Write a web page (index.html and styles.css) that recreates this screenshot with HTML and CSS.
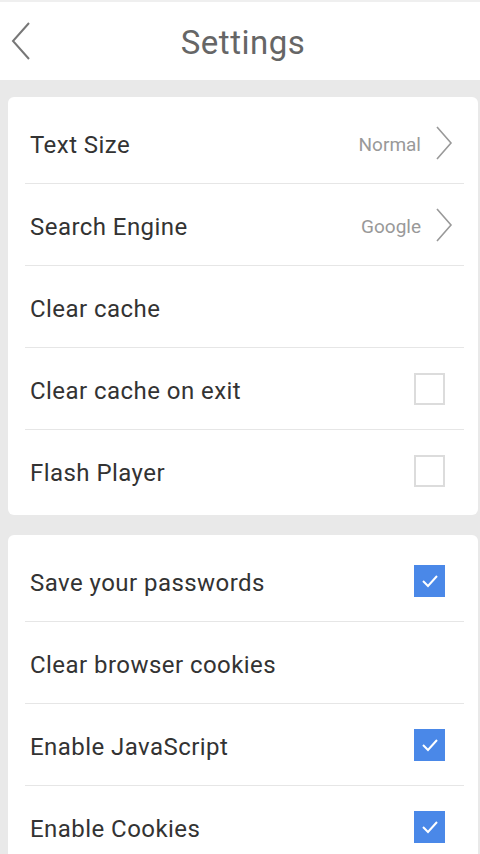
FILE: index.html
```html
<!DOCTYPE html>
<html lang="en">
<head>
    <meta charset="UTF-8">
    <meta name="viewport" content="width=device-width, initial-scale=1.0">
    <title>Settings</title>
    <link rel="stylesheet" href="styles.css">
</head>
<body>
    <header class="topbar">
        <button class="back" aria-label="Back">
            <svg width="22" height="40" viewBox="0 0 22 40"><path d="M19 2 L3 20 L19 38" fill="none" stroke="#777" stroke-width="2"/></svg>
        </button>
        <h1 class="title">Settings</h1>
    </header>

    <main class="content">
        <section class="card">
            <div class="row">
                <span class="label">Text Size</span>
                <span class="value">Normal</span>
                <svg class="chevron" width="18" height="34" viewBox="0 0 18 34"><path d="M2 1 L16 17 L2 33" fill="none" stroke="#999" stroke-width="1.6"/></svg>
            </div>
            <div class="row">
                <span class="label">Search Engine</span>
                <span class="value">Google</span>
                <svg class="chevron" width="18" height="34" viewBox="0 0 18 34"><path d="M2 1 L16 17 L2 33" fill="none" stroke="#999" stroke-width="1.6"/></svg>
            </div>
            <div class="row">
                <span class="label">Clear cache</span>
            </div>
            <div class="row">
                <span class="label">Clear cache on exit</span>
                <span class="check"></span>
            </div>
            <div class="row">
                <span class="label">Flash Player</span>
                <span class="check"></span>
            </div>
        </section>

        <section class="card">
            <div class="row">
                <span class="label">Save your passwords</span>
                <span class="check on"><svg width="18" height="14" viewBox="0 0 18 14"><path d="M2 7 L7 12 L16 2" fill="none" stroke="#fff" stroke-width="2"/></svg></span>
            </div>
            <div class="row">
                <span class="label">Clear browser cookies</span>
            </div>
            <div class="row">
                <span class="label">Enable JavaScript</span>
                <span class="check on"><svg width="18" height="14" viewBox="0 0 18 14"><path d="M2 7 L7 12 L16 2" fill="none" stroke="#fff" stroke-width="2"/></svg></span>
            </div>
            <div class="row">
                <span class="label">Enable Cookies</span>
                <span class="check on"><svg width="18" height="14" viewBox="0 0 18 14"><path d="M2 7 L7 12 L16 2" fill="none" stroke="#fff" stroke-width="2"/></svg></span>
            </div>
        </section>
    </main>
</body>
</html>
```

FILE: styles.css
```css
* {
    margin: 0;
    padding: 0;
    box-sizing: border-box;
    font-family: Roboto, 'Noto Sans', sans-serif;
}

body {
    background: #e9e9e9;
    min-height: 100vh;
    overflow: hidden;
}

.topbar {
    height: 80px;
    background: #fff;
    border-top: 2px solid #efefef;
    display: flex;
    align-items: center;
    justify-content: center;
    position: relative;
}

.back {
    position: absolute;
    left: 10px;
    top: 19px;
    background: none;
    border: none;
    display: flex;
}

.title {
    font-size: 33px;
    font-weight: 400;
    letter-spacing: 0.5px;
    color: #666;
    margin-left: 6px;
    margin-top: 2px;
}

.content {
    padding: 17px 2px 0 8px;
    display: flex;
    flex-direction: column;
    gap: 20px;
}

.card {
    background: #fff;
    border-radius: 6px;
    padding: 5px 14px 4px 17px;
}

.row {
    height: 82px;
    display: flex;
    align-items: center;
    padding: 0 19px 0 5px;
    border-bottom: 1px solid #e6e6e6;
}

.row:last-child {
    border-bottom: none;
    height: 81px;
}

.label {
    flex: 1;
    font-size: 24px;
    letter-spacing: 0.45px;
    color: #333;
    padding-top: 4px;
}

.value {
    font-size: 19px;
    color: #999;
    margin-right: 14px;
    padding-top: 4px;
}

.chevron {
    margin-right: -8px;
}

.check {
    width: 31px;
    height: 32px;
    border: 2px solid #dcdcdc;
    display: flex;
    align-items: center;
    justify-content: center;
}

.check.on {
    background: #4a88e8;
    border-color: #4a88e8;
}
```
